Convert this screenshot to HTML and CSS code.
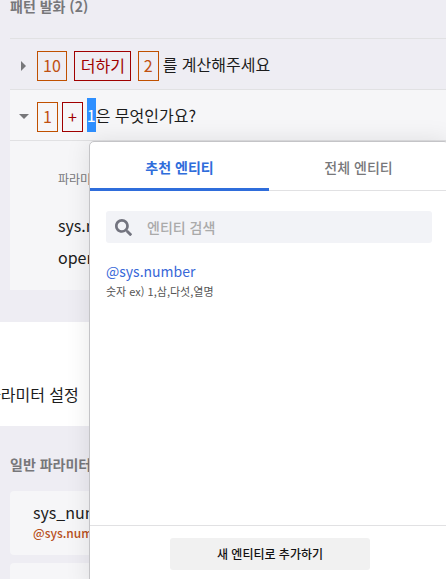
FILE: index.html
```html
<!DOCTYPE html>
<html lang="ko">
<head>
<meta charset="utf-8">
<title>패턴 발화</title>
<link rel="stylesheet" href="styles.css">
</head>
<body>
<main class="page">
  <section class="patterns">
    <h2 class="section-title">패턴 발화 (2)</h2>
    <div class="row">
      <svg class="caret" width="12" height="12" viewBox="0 0 12 12"><path d="M3 1L8 6L3 11Z"/></svg>
      <span class="tag entity">10</span>
      <span class="tag keyword wide word">더하기</span>
      <span class="tag entity wide">2</span>
      <span class="text">를 계산해주세요</span>
    </div>
    <div class="row open">
      <svg class="caret" width="12" height="12" viewBox="0 0 12 12"><path d="M1 3H11L6 8Z"/></svg>
      <span class="tag entity">1</span>
      <span class="tag keyword">+</span>
      <span class="selected">1</span><span class="text">은 무엇인가요?</span>
    </div>
    <div class="detail">
      <div class="detail-head">파라미터명</div>
      <div class="detail-item">sys.number</div>
      <div class="detail-item">operator</div>
    </div>
  </section>
  <section class="settings"><h1 class="settings-title">파라미터 설정</h1></section>
  <section class="params">
    <h2 class="section-title">일반 파라미터</h2>
    <div class="card">
      <div class="card-name">sys_number</div>
      <div class="card-type">@sys.number</div>
    </div>
    <div class="card"></div>
  </section>
</main>
<aside class="popup">
  <nav class="tabs">
    <div class="tab active">추천 엔티티</div>
    <div class="tab">전체 엔티티</div>
  </nav>
  <div class="popup-body">
    <div class="search">
      <svg width="17" height="17" viewBox="0 0 512 512"><path fill="#73747f" d="M505 442.700L405.300 343c-4.500-4.500-10.600-7-17-7H372c27.600-35.300 44-79.700 44-128C416 93.100 322.900 0 208 0S0 93.100 0 208s93.100 208 208 208c48.300 0 92.700-16.400 128-44v16.300c0 6.400 2.500 12.500 7 17l99.700 99.700c9.400 9.400 24.600 9.400 33.900 0l28.300-28.300c9.400-9.400 9.400-24.600.1-34zM208 336c-70.700 0-128-57.200-128-128 0-70.700 57.200-128 128-128 70.700 0 128 57.200 128 128 0 70.700-57.200 128-128 128z"/></svg>
      <span>엔티티 검색</span>
    </div>
    <div class="result-name">@sys.number</div>
    <div class="result-example">숫자 ex) 1,삼,다섯,열명</div>
  </div>
  <footer class="popup-footer"><button class="add">새 엔티티로 추가하기</button></footer>
</aside>
</body>
</html>
```
FILE: styles.css
```css
* { box-sizing: border-box; }
body {
  margin: 0;
  width: 446px;
  height: 579px;
  position: relative;
  overflow: hidden;
  background: #eeedf3;
  color: #1c1c1c;
  font: 16px/24px "Noto Sans CJK KR", "Noto Sans", sans-serif;
}
.page { height: 579px; overflow: hidden; }
.patterns { display: flow-root; height: 322px; padding-left: 10px; }
.section-title {
  margin: 0;
  font-size: 14px;
  line-height: 20px;
  font-weight: 700;
  color: #77777a;
}
.patterns .section-title { height: 38px; line-height: 12px; }
.row {
  height: 51px;
  border-top: 1px solid #e1e1e3;
  display: flex;
  align-items: center;
  padding: 3px 0 0 8px;
  white-space: nowrap;
}
.row.open { background: #f6f6f8; }
.caret { fill: #77777a; margin-right: 7px; flex: none; }
.tag {
  height: 30px;
  line-height: 26px;
  border: 1px solid;
  padding: 0 5px;
  margin-right: 4px;
}
.tag.wide { margin-left: 3px; }
.tag.word { width: 57px; padding-left: 6px; }
.text { margin-top: -3px; }
.entity { color: #c05010; border-color: #c05000; }
.keyword { color: #a00000; border-color: #a00000; }
.selected {
  height: 34px;
  line-height: 34px;
  margin-top: -3px;
  color: #fff;
  background: #2e8fff;
}
.detail {
  height: 150px;
  border-top: 1px solid #e1e1e3;
  background: #f6f6f8;
  padding: 29px 0 0 48px;
}
.detail-head { font-size: 12px; line-height: 18px; color: #77777a; margin-bottom: 21px; }
.detail-item { height: 32px; line-height: 32px; }
.settings { height: 104px; background: #fff; padding-top: 60px; }
.settings-title {
  margin: 0 0 0 -14px;
  font-size: 16px;
  line-height: 24px;
  font-weight: 400;
}
.params { padding: 28px 0 0 10px; }
.card {
  height: 64px;
  margin-bottom: 8px;
  border-radius: 4px;
  background: #f6f6f8;
  padding: 9px 23px;
}
.params .section-title { margin-bottom: 17px; }
.card-name { line-height: 24px; }
.card-type { font-size: 12px; line-height: 18px; font-weight: 500; color: #b85020; }
.popup {
  position: absolute;
  left: 89px;
  top: 141px;
  width: 360px;
  height: 450px;
  border: 1px solid #c4c4c7;
  border-radius: 5px;
  background: #fff;
  box-shadow: 0 0 24px rgba(0, 0, 0, .1);
  display: flex;
  flex-direction: column;
}
.tabs { display: flex; height: 49px; }
.tab {
  flex: 1;
  text-align: center;
  font-size: 14px;
  line-height: 51px;
  font-weight: 500;
  color: #77777a;
  border-bottom: 1px solid #e1e1e3;
}
.tab.active { font-weight: 700; color: #2f6ddb; border-bottom: 3px solid #2f6ddb; }
.popup-body { height: 334px; padding: 20px 16px 0; }
.search {
  height: 32px;
  border-radius: 3px;
  background: #f2f3f7;
  display: flex;
  align-items: center;
  gap: 15px;
  padding-left: 9px;
  font-size: 14px;
  color: #aaa;
  font-weight: 500;
}
.result-name { margin-top: 18px; font-size: 14px; line-height: 20px; color: #3868d8; }
.result-example { font-size: 11px; line-height: 20px; color: #555; }
.popup-footer { border-top: 1px solid #e1e1e3; padding: 12px 80px; width: 358px; }
.add {
  display: block;
  width: 200px;
  height: 32px;
  padding: 0;
  border: 0;
  border-radius: 3px;
  background: #f1f1f1;
  color: #111;
  font: 500 12px/32px "Noto Sans CJK KR", sans-serif;
}
```
